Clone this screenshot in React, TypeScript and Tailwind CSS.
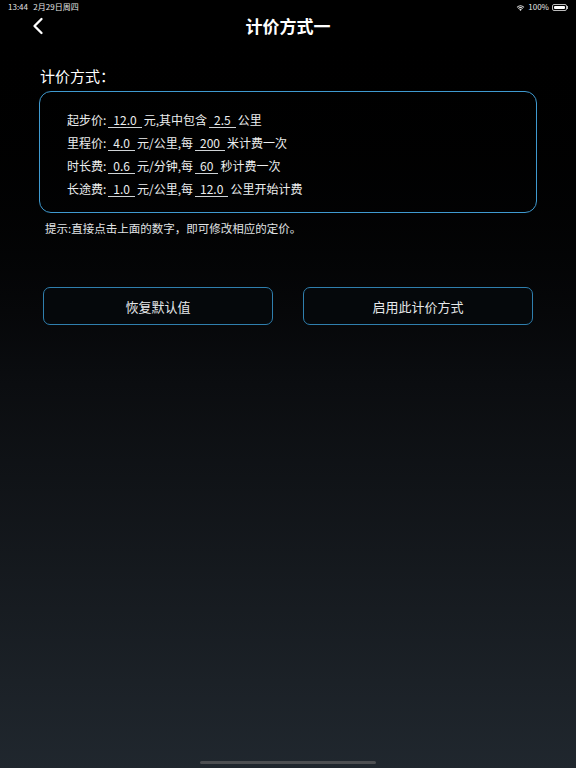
import { ChevronLeft } from "lucide-react";

const font = { fontFamily: '"Noto Sans CJK SC", "Noto Sans", sans-serif' };

function Val({ v }: { v: string }) {
  return (
    <span className="mx-[2px] inline-block border-b border-[#cfd3d6] px-[5px] leading-[15px]">
      {v}
    </span>
  );
}

function Row({ children }: { children: React.ReactNode }) {
  return <div className="flex h-[23px] items-center whitespace-pre">{children}</div>;
}

export default function App() {
  return (
    <div
      className="relative flex h-[768px] w-[576px] flex-col overflow-hidden bg-gradient-to-b from-black via-[#0b0d10] to-[#20272e] text-white"
      style={font}
    >
      {/* status bar */}
      <div className="flex h-[14px] items-center justify-between px-[8px] text-[8px] text-[#e5e5e5]">
        <span>13:44&nbsp;&nbsp;&nbsp;2月29日周四</span>
        <div className="flex items-center gap-[3px]">
          <svg width="9" height="7" viewBox="0 0 12 9" fill="#e5e5e5">
            <path d="M6 9 4.3 7a2.4 2.4 0 0 1 3.4 0Z" />
            <path d="M2.7 5.4a4.6 4.6 0 0 1 6.6 0l-.9 1a3.3 3.3 0 0 0-4.8 0Z" />
            <path d="M1 3.7a7 7 0 0 1 10 0l-.9 1a5.7 5.7 0 0 0-8.2 0Z" />
          </svg>
          <span>100%</span>
          <div className="flex items-center">
            <div className="h-[7px] w-[15px] rounded-[2px] border border-[#bbb] p-[1px]">
              <div className="h-full w-full rounded-[1px] bg-white" />
            </div>
            <div className="h-[3px] w-[1px] bg-[#bbb]" />
          </div>
        </div>
      </div>

      {/* nav */}
      <div className="relative flex h-[24px] items-center justify-center">
        <ChevronLeft className="absolute left-[24px] h-[28px] w-[28px]" strokeWidth={2} />
        <span className="text-[17px] font-semibold">计价方式一</span>
      </div>

      <div className="px-[39px] pt-[27px]">
        <div className="pl-[1px] text-[15px] leading-[22px]">计价方式：</div>

        <div className="mt-[4px] flex h-[122px] w-[498px] flex-col justify-center rounded-[12px] border border-[#3f9ad0] pt-[4px] pl-[27px] text-[12px] text-[#eceeef]">
          <Row>
            起步价:<Val v="12.0" />元,其中包含<Val v="2.5" />公里
          </Row>
          <Row>
            里程价:<Val v="4.0" />元/公里,每<Val v="200" />米计费一次
          </Row>
          <Row>
            时长费:<Val v="0.6" />元/分钟,每<Val v="60" />秒计费一次
          </Row>
          <Row>
            长途费:<Val v="1.0" />元/公里,每<Val v="12.0" />公里开始计费
          </Row>
        </div>

        <div className="mt-[7px] pl-[6px] text-[11.5px] text-[#e0e3e5]">
          提示:直接点击上面的数字，即可修改相应的定价。
        </div>

        <div className="mt-[50px] flex gap-[30px] px-[4px]">
          <button className="h-[38px] w-[230px] rounded-[7px] border border-[#2f7fae] bg-[#05080b] text-[13px] text-[#e6e8ea]">
            恢复默认值
          </button>
          <button className="h-[38px] w-[230px] rounded-[7px] border border-[#2f7fae] bg-[#05080b] text-[13px] text-[#e6e8ea]">
            启用此计价方式
          </button>
        </div>
      </div>

      <div className="absolute bottom-[4px] left-[200px] h-[3px] w-[176px] rounded-full bg-[#4d4f52]" />
    </div>
  );
}
